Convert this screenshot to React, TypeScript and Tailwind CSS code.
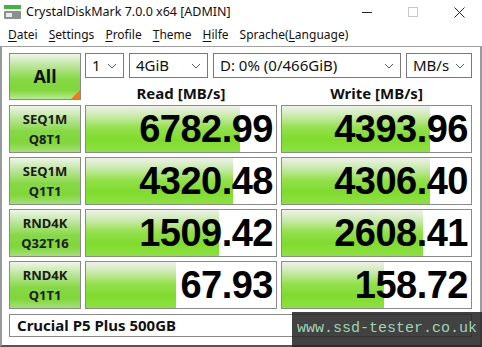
import React from "react";

const ui = { fontFamily: '"Noto Sans", "Open Sans", sans-serif' };

type Row = { l1: string; l2: string; read: string; rf: number; write: string; wf: number };

const rows: Row[] = [
  { l1: "SEQ1M", l2: "Q8T1", read: "6782.99", rf: 154, write: "4393.96", wf: 148 },
  { l1: "SEQ1M", l2: "Q1T1", read: "4320.48", rf: 147, write: "4306.40", wf: 148 },
  { l1: "RND4K", l2: "Q32T16", read: "1509.42", rf: 133, write: "2608.41", wf: 141 },
  { l1: "RND4K", l2: "Q1T1", read: "67.93", rf: 90, write: "158.72", wf: 102 },
];

function Chevron() {
  return (
    <svg width="10" height="6" viewBox="0 0 10 6" className="shrink-0">
      <polyline points="1,1 5,5 9,1" fill="none" stroke="#606060" strokeWidth="1" />
    </svg>
  );
}

function Combo({ w, text }: { w: string; text: string }) {
  return (
    <div className={`${w} h-[25px] flex items-center justify-between border border-[#7a7a7a] bg-white pl-[6px] pr-[6px] text-[15px] text-[#111]`}>
      <span className="leading-none">{text}</span>
      <Chevron />
    </div>
  );
}

function ValueCell({ value, fill }: { value: string; fill: number }) {
  return (
    <div className="relative h-[48px] border border-[#8a8a8a] bg-white overflow-hidden">
      <div
        className="absolute left-0 top-0 bottom-0 bg-[linear-gradient(to_bottom,#eef1ea_0%,#c9eaac_22%,#93e04b_48%,#80db2e_72%,#8ce240_100%)]"
        style={{ width: fill }}
      />
      <div
        className="relative flex h-full items-center justify-end pr-[3px] text-[38px] font-bold tracking-[-0.5px] text-black"
        style={{ fontFamily: '"Liberation Sans", Arial, sans-serif' }}
      >
        {value}
      </div>
    </div>
  );
}

function LabelCell({ l1, l2 }: { l1: string; l2: string }) {
  return (
    <div className="flex h-[48px] flex-col items-center justify-center border border-[#8a8a8a] bg-[linear-gradient(to_bottom,#eef6e8_0%,#bfe6a0_25%,#86d944_55%,#80d63b_80%,#a4e078_100%)] text-[13px] font-bold leading-[20px] text-[#1a1a1a]">
      <span>{l1}</span>
      <span>{l2}</span>
    </div>
  );
}

function Menu({ u, rest }: { u: string; rest: string }) {
  return (
    <span>
      <span className="underline underline-offset-2">{u}</span>
      {rest}
    </span>
  );
}

export default function App() {
  return (
    <div className="relative h-[347px] w-[482px] overflow-hidden bg-white text-[#111]" style={ui}>
      {/* title bar */}
      <div className="flex h-[24px] items-center">
        <svg width="17" height="16" viewBox="0 0 17 16" className="ml-[4px] mr-[5px]">
          <rect x="0" y="1" width="17" height="4" fill="#3cb83a" />
          <rect x="0" y="7" width="17" height="8" rx="1" fill="#8a8f8f" />
          <rect x="2" y="9" width="6" height="4" fill="#e8ecec" />
        </svg>
        <span className="text-[12.5px]">CrystalDiskMark 7.0.0 x64 [ADMIN]</span>
        <div className="ml-auto flex h-full items-center">
          <div className="flex w-[46px] justify-center">
            <div className="h-[1px] w-[10px] bg-[#222]" />
          </div>
          <div className="flex w-[46px] justify-center">
            <div className="h-[10px] w-[10px] border border-[#c8c8c8]" />
          </div>
          <div className="flex w-[46px] justify-center">
            <svg width="11" height="11" viewBox="0 0 11 11">
              <path d="M0.5 0.5L10.5 10.5M10.5 0.5L0.5 10.5" stroke="#222" strokeWidth="1" />
            </svg>
          </div>
        </div>
      </div>

      {/* menu bar */}
      <div className="flex h-[22px] items-center gap-[11px] pl-[8px] text-[12px]">
        <Menu u="D" rest="atei" />
        <Menu u="S" rest="ettings" />
        <Menu u="P" rest="rofile" />
        <Menu u="T" rest="heme" />
        <Menu u="H" rest="ilfe" />
        <span>
          Sprache(<span className="underline underline-offset-2">L</span>anguage)
        </span>
      </div>

      {/* content */}
      <div className="h-[301px] border-x-2 border-t border-b-2 border-x-[#9a9a9a] border-t-[#a0a0a0] border-b-[#555] pl-[7px] pt-[6px]">
        <div className="flex gap-[4px]">
          <div className="relative flex h-[47px] w-[72px] items-center justify-center border border-[#8a8a8a] bg-[linear-gradient(to_bottom,#eef6e8_0%,#bfe6a0_25%,#86d944_55%,#80d63b_80%,#b8eb90_100%)] text-[18px] font-bold">
            All
            <div className="absolute bottom-0 right-0 h-0 w-0 border-b-[9px] border-l-[9px] border-b-[#ef7a1a] border-l-transparent" />
          </div>
          <div className="flex flex-col">
            <div className="flex gap-[5px]">
              <Combo w="w-[39px]" text="1" />
              <Combo w="w-[79px]" text="4GiB" />
              <Combo w="w-[188px]" text="D: 0% (0/466GiB)" />
              <Combo w="w-[66px]" text="MB/s" />
            </div>
            <div className="flex h-[22px] items-start gap-[4px] pt-[6px] text-[15px] font-bold leading-[18px]">
              <div className="w-[192px] text-center">Read [MB/s]</div>
              <div className="w-[191px] text-center">Write [MB/s]</div>
            </div>
          </div>
        </div>

        <div className="mt-[5px] flex flex-col gap-[4px]">
          {rows.map((r, i) => (
            <div key={i} className="grid grid-cols-[72px_192px_191px] gap-x-[4px]">
              <LabelCell l1={r.l1} l2={r.l2} />
              <ValueCell value={r.read} fill={r.rf} />
              <ValueCell value={r.write} fill={r.wf} />
            </div>
          ))}
        </div>

        <div className="mt-[5px] flex h-[23px] w-[463px] items-center border border-[#8a8a8a] bg-white pl-[7px] text-[15px] font-bold">
          Crucial P5 Plus 500GB
        </div>
      </div>

      {/* watermark */}
      <div className="absolute bottom-0 right-0 flex h-[35px] w-[190px] items-center justify-center bg-[rgba(40,40,40,0.88)]">
        <span
          className="text-[15px] text-[#9fd4b2]"
          style={{ fontFamily: '"Liberation Mono", "Courier New", monospace' }}
        >
          www.ssd-tester.co.uk
        </span>
      </div>
    </div>
  );
}
